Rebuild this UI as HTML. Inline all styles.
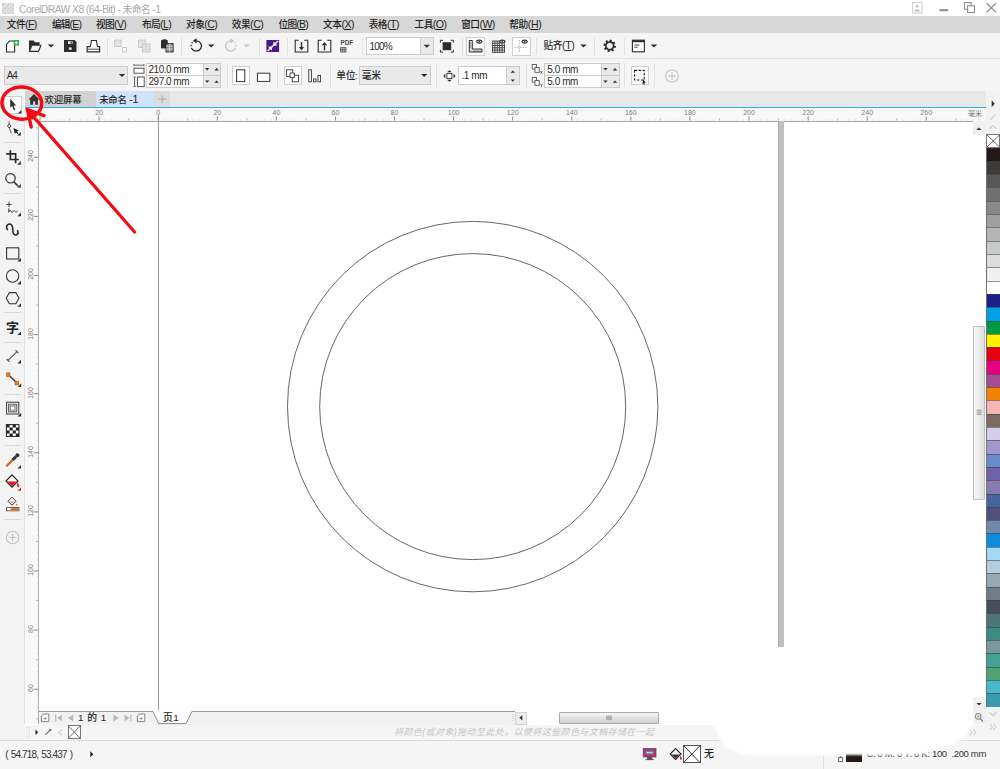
<!DOCTYPE html>
<html lang="zh"><head><meta charset="utf-8"><title>CorelDRAW X8</title>
<style>

html,body{margin:0;padding:0}
body{width:1000px;height:769px;position:relative;overflow:hidden;background:#fff;
 font-family:"Liberation Sans","Noto Sans CJK SC",sans-serif;font-size:10px;color:#262626;line-height:1;font-weight:500}
div{position:absolute;box-sizing:border-box;white-space:nowrap}
span{line-height:0}
span.l{font-size:10.6px}
u{text-decoration:underline;text-underline-offset:1px}
.bar{left:0;width:1000px}
.sep{width:1px;background:#e1e1e1}
.hsep{height:1px;background:#dcdcdc;left:4px;width:17px}
.inp{background:#fff;border:1px solid #cccccc}
.cmb{background:#e9e9e9;border:1px solid #cccccc}
.tx{font-size:10px;color:#2a2a2a}
.boxed{background:#fff;border:1px solid #cfcfcf}
.m{top:19.5px;font-size:10px;color:#1e1e1e;letter-spacing:-0.3px}
.rl{font-size:7px;color:#7c7c7c;top:109.4px;font-weight:400;transform:translateX(-50%)}
.vl{font-size:7px;color:#7c7c7c;left:30.4px;font-weight:400;transform:translate(-50%,-50%) rotate(-90deg)}
.sw{left:986px;width:14px}
svg{position:absolute;left:0;top:0}

</style></head>
<body>
<div style="left:24.5px;top:91px;width:975.5px;height:16.5px;background:#e7e7e7"></div>
<div style="left:24.5px;top:91px;width:71px;height:16px;background:#d2d2d2"></div>
<div style="left:95.5px;top:91px;width:58.5px;height:16px;background:#cfe4f9"></div>
<div style="left:154px;top:91px;width:15.5px;height:16px;background:#dcdcdc"></div>
<div id="tb1" style="left:44.5px;top:93.7px;font-size:9.4px;line-height:12px;color:#222;letter-spacing:-0.154px;">欢迎屏幕</div>
<div id="tb2" style="left:99.2px;top:93.7px;font-size:9.4px;line-height:12px;color:#222;letter-spacing:-0.253px;">未命名<span class="l"> -1</span></div>
<div style="left:24.5px;top:106.8px;width:961px;height:1.6px;background:#27b0ec"></div>
<div style="left:24.5px;top:108.4px;width:961px;height:13.2px;background:#f8f8f8"></div>
<div style="left:24px;top:121.4px;width:15px;height:603px;background:#f8f8f8;border-right:1px solid #b0b0b0;border-left:1px solid #e0e0e0"></div>
<div style="left:24.5px;top:108.4px;width:14px;height:13px;background:#f4f4f4"></div>
<div class="rl" style="left:99.1px">20</div>
<div class="rl" style="left:158.2px">0</div>
<div class="rl" style="left:217.3px">20</div>
<div class="rl" style="left:276.4px">40</div>
<div class="rl" style="left:335.4px">60</div>
<div class="rl" style="left:394.5px">80</div>
<div class="rl" style="left:453.6px">100</div>
<div class="rl" style="left:512.7px">120</div>
<div class="rl" style="left:571.8px">140</div>
<div class="rl" style="left:630.8px">160</div>
<div class="rl" style="left:689.9px">180</div>
<div class="rl" style="left:749.0px">200</div>
<div class="rl" style="left:808.1px">220</div>
<div class="rl" style="left:867.2px">240</div>
<div class="rl" style="left:926.2px">260</div>
<div style="left:968px;top:109.8px;font-size:7px;color:#777;font-weight:400">毫米</div>
<div class="vl" style="top:156.2px">240</div>
<div class="vl" style="top:215.3px">220</div>
<div class="vl" style="top:274.4px">200</div>
<div class="vl" style="top:333.5px">180</div>
<div class="vl" style="top:392.6px">160</div>
<div class="vl" style="top:451.7px">140</div>
<div class="vl" style="top:510.8px">120</div>
<div class="vl" style="top:569.9px">100</div>
<div class="vl" style="top:629.0px">80</div>
<div class="vl" style="top:688.1px">60</div>
<div style="left:38.5px;top:121px;width:947px;height:1px;background:#a6a6a6"></div>
<div style="left:157.7px;top:115px;width:1px;height:596px;background:#9c9c9c"></div>
<div style="left:778px;top:121.4px;width:5.8px;height:526px;background:#c1c1c1;border-left:1px solid #adadad"></div>
<div style="left:985.5px;top:91px;width:14.5px;height:649px;background:#f2f2f2"></div>
<div style="left:972.5px;top:121.4px;width:13px;height:14px;background:#f0f0f0"></div>
<div style="left:972.5px;top:697px;width:13px;height:27px;background:#f0f0f0"></div>
<div style="left:973px;top:326px;width:12px;height:174px;border:1px solid #bcbcbc;border-radius:1px;background:linear-gradient(90deg,#fafafa,#dedede)"></div>
<div class="sw" style="top:134px;height:13.5px;background:#fff;border:1px solid #777"></div>
<div class="sw" style="top:147.50px;height:13.61px;background:#231815;border-left:1px solid #6e6e6e;border-top:1px solid rgba(60,60,60,.55)"></div>
<div class="sw" style="top:160.81px;height:13.61px;background:#3e3a39;border-left:1px solid #6e6e6e;border-top:1px solid rgba(60,60,60,.55)"></div>
<div class="sw" style="top:174.12px;height:13.61px;background:#595757;border-left:1px solid #6e6e6e;border-top:1px solid rgba(60,60,60,.55)"></div>
<div class="sw" style="top:187.43px;height:13.61px;background:#727171;border-left:1px solid #6e6e6e;border-top:1px solid rgba(60,60,60,.55)"></div>
<div class="sw" style="top:200.74px;height:13.61px;background:#898989;border-left:1px solid #6e6e6e;border-top:1px solid rgba(60,60,60,.55)"></div>
<div class="sw" style="top:214.05px;height:13.61px;background:#9fa0a0;border-left:1px solid #6e6e6e;border-top:1px solid rgba(60,60,60,.55)"></div>
<div class="sw" style="top:227.36px;height:13.61px;background:#b5b5b6;border-left:1px solid #6e6e6e;border-top:1px solid rgba(60,60,60,.55)"></div>
<div class="sw" style="top:240.67px;height:13.61px;background:#c9caca;border-left:1px solid #6e6e6e;border-top:1px solid rgba(60,60,60,.55)"></div>
<div class="sw" style="top:253.98px;height:13.61px;background:#dcdddd;border-left:1px solid #6e6e6e;border-top:1px solid rgba(60,60,60,.55)"></div>
<div class="sw" style="top:267.29px;height:13.61px;background:#efefef;border-left:1px solid #6e6e6e;border-top:1px solid rgba(60,60,60,.55)"></div>
<div class="sw" style="top:280.60px;height:13.61px;background:#ffffff;border-left:1px solid #6e6e6e;border-top:1px solid rgba(60,60,60,.55)"></div>
<div class="sw" style="top:293.91px;height:13.61px;background:#1d2088;border-left:1px solid #6e6e6e;border-top:1px solid rgba(60,60,60,.55)"></div>
<div class="sw" style="top:307.22px;height:13.61px;background:#00a0e9;border-left:1px solid #6e6e6e;border-top:1px solid rgba(60,60,60,.55)"></div>
<div class="sw" style="top:320.53px;height:13.61px;background:#009944;border-left:1px solid #6e6e6e;border-top:1px solid rgba(60,60,60,.55)"></div>
<div class="sw" style="top:333.84px;height:13.61px;background:#fff100;border-left:1px solid #6e6e6e;border-top:1px solid rgba(60,60,60,.55)"></div>
<div class="sw" style="top:347.15px;height:13.61px;background:#e60012;border-left:1px solid #6e6e6e;border-top:1px solid rgba(60,60,60,.55)"></div>
<div class="sw" style="top:360.46px;height:13.61px;background:#e4007f;border-left:1px solid #6e6e6e;border-top:1px solid rgba(60,60,60,.55)"></div>
<div class="sw" style="top:373.77px;height:13.61px;background:#a84a94;border-left:1px solid #6e6e6e;border-top:1px solid rgba(60,60,60,.55)"></div>
<div class="sw" style="top:387.08px;height:13.61px;background:#f08300;border-left:1px solid #6e6e6e;border-top:1px solid rgba(60,60,60,.55)"></div>
<div class="sw" style="top:400.39px;height:13.61px;background:#f6b4b4;border-left:1px solid #6e6e6e;border-top:1px solid rgba(60,60,60,.55)"></div>
<div class="sw" style="top:413.70px;height:13.61px;background:#7d6b63;border-left:1px solid #6e6e6e;border-top:1px solid rgba(60,60,60,.55)"></div>
<div class="sw" style="top:427.01px;height:13.61px;background:#d4cee8;border-left:1px solid #6e6e6e;border-top:1px solid rgba(60,60,60,.55)"></div>
<div class="sw" style="top:440.32px;height:13.61px;background:#a296cc;border-left:1px solid #6e6e6e;border-top:1px solid rgba(60,60,60,.55)"></div>
<div class="sw" style="top:453.63px;height:13.61px;background:#6a8ccc;border-left:1px solid #6e6e6e;border-top:1px solid rgba(60,60,60,.55)"></div>
<div class="sw" style="top:466.94px;height:13.61px;background:#7160aa;border-left:1px solid #6e6e6e;border-top:1px solid rgba(60,60,60,.55)"></div>
<div class="sw" style="top:480.25px;height:13.61px;background:#8a7ab2;border-left:1px solid #6e6e6e;border-top:1px solid rgba(60,60,60,.55)"></div>
<div class="sw" style="top:493.56px;height:13.61px;background:#46649e;border-left:1px solid #6e6e6e;border-top:1px solid rgba(60,60,60,.55)"></div>
<div class="sw" style="top:506.87px;height:13.61px;background:#54507e;border-left:1px solid #6e6e6e;border-top:1px solid rgba(60,60,60,.55)"></div>
<div class="sw" style="top:520.18px;height:13.61px;background:#7088aa;border-left:1px solid #6e6e6e;border-top:1px solid rgba(60,60,60,.55)"></div>
<div class="sw" style="top:533.49px;height:13.61px;background:#0c8cda;border-left:1px solid #6e6e6e;border-top:1px solid rgba(60,60,60,.55)"></div>
<div class="sw" style="top:546.80px;height:13.61px;background:#a2d9f5;border-left:1px solid #6e6e6e;border-top:1px solid rgba(60,60,60,.55)"></div>
<div class="sw" style="top:560.11px;height:13.61px;background:#b2cede;border-left:1px solid #6e6e6e;border-top:1px solid rgba(60,60,60,.55)"></div>
<div class="sw" style="top:573.42px;height:13.61px;background:#98a8b2;border-left:1px solid #6e6e6e;border-top:1px solid rgba(60,60,60,.55)"></div>
<div class="sw" style="top:586.73px;height:13.61px;background:#707c86;border-left:1px solid #6e6e6e;border-top:1px solid rgba(60,60,60,.55)"></div>
<div class="sw" style="top:600.04px;height:13.61px;background:#484e58;border-left:1px solid #6e6e6e;border-top:1px solid rgba(60,60,60,.55)"></div>
<div class="sw" style="top:613.35px;height:13.61px;background:#4c7676;border-left:1px solid #6e6e6e;border-top:1px solid rgba(60,60,60,.55)"></div>
<div class="sw" style="top:626.66px;height:13.61px;background:#3c8a82;border-left:1px solid #6e6e6e;border-top:1px solid rgba(60,60,60,.55)"></div>
<div class="sw" style="top:639.97px;height:13.61px;background:#789a9a;border-left:1px solid #6e6e6e;border-top:1px solid rgba(60,60,60,.55)"></div>
<div class="sw" style="top:653.28px;height:13.61px;background:#44a292;border-left:1px solid #6e6e6e;border-top:1px solid rgba(60,60,60,.55)"></div>
<div class="sw" style="top:666.59px;height:13.61px;background:#50a272;border-left:1px solid #6e6e6e;border-top:1px solid rgba(60,60,60,.55)"></div>
<div class="sw" style="top:679.90px;height:13.61px;background:#48b9cd;border-left:1px solid #6e6e6e;border-top:1px solid rgba(60,60,60,.55)"></div>
<div class="sw" style="top:693.21px;height:13.61px;background:#3c9aae;border-left:1px solid #6e6e6e;border-top:1px solid rgba(60,60,60,.55)"></div>
<div class="bar" style="top:0;height:16px;background:#fff"></div>
<div id="ttl" style="left:19px;top:3.8px;font-size:9.8px;line-height:12px;color:#a9a9a9;letter-spacing:-0.601px;font-weight:400;"><span style="font-size:10.4px">CorelDRAW X8 (64-Bit) - </span>未命名<span style="font-size:10.4px"> -1</span></div>
<div class="bar" style="top:16px;height:17px;background:#d7d7d7"></div>
<div id="m0" style="left:6.8px;top:18.65px;font-size:9.7px;line-height:12px;color:#1e1e1e;letter-spacing:-0.584px;">文件<span class="l">(<u>F</u>)</span></div>
<div id="m1" style="left:51.9px;top:18.65px;font-size:9.7px;line-height:12px;color:#1e1e1e;letter-spacing:-0.863px;">编辑<span class="l">(<u>E</u>)</span></div>
<div id="m2" style="left:96px;top:18.65px;font-size:9.7px;line-height:12px;color:#1e1e1e;letter-spacing:-0.683px;">视图<span class="l">(<u>V</u>)</span></div>
<div id="m3" style="left:142.1px;top:18.65px;font-size:9.7px;line-height:12px;color:#1e1e1e;letter-spacing:-0.689px;">布局<span class="l">(<u>L</u>)</span></div>
<div id="m4" style="left:186.1px;top:18.65px;font-size:9.7px;line-height:12px;color:#1e1e1e;letter-spacing:-0.599px;">对象<span class="l">(<u>C</u>)</span></div>
<div id="m5" style="left:231.7px;top:18.65px;font-size:9.7px;line-height:12px;color:#1e1e1e;letter-spacing:-0.479px;">效果<span class="l">(<u>C</u>)</span></div>
<div id="m6" style="left:278.5px;top:18.65px;font-size:9.7px;line-height:12px;color:#1e1e1e;letter-spacing:-0.783px;">位图<span class="l">(<u>B</u>)</span></div>
<div id="m7" style="left:323px;top:18.65px;font-size:9.7px;line-height:12px;color:#1e1e1e;letter-spacing:-0.503px;">文本<span class="l">(<u>X</u>)</span></div>
<div id="m8" style="left:368.7px;top:18.65px;font-size:9.7px;line-height:12px;color:#1e1e1e;letter-spacing:-0.524px;">表格<span class="l">(<u>T</u>)</span></div>
<div id="m9" style="left:414.5px;top:18.65px;font-size:9.7px;line-height:12px;color:#1e1e1e;letter-spacing:-0.537px;">工具<span class="l">(<u>O</u>)</span></div>
<div id="m10" style="left:461.2px;top:18.65px;font-size:9.7px;line-height:12px;color:#1e1e1e;letter-spacing:-0.567px;">窗口<span class="l">(<u>W</u>)</span></div>
<div id="m11" style="left:509.2px;top:18.65px;font-size:9.7px;line-height:12px;color:#1e1e1e;letter-spacing:-0.359px;">帮助<span class="l">(<u>H</u>)</span></div>
<div class="bar" style="top:33px;height:25px;background:#f5f5f5"></div>
<div class="bar" style="top:58px;height:1px;background:#e2e2e2"></div>
<div class="sep" style="left:107px;top:38px;height:17px"></div>
<div class="sep" style="left:181px;top:38px;height:17px"></div>
<div class="sep" style="left:259px;top:38px;height:17px"></div>
<div class="sep" style="left:287px;top:38px;height:17px"></div>
<div class="sep" style="left:362px;top:38px;height:17px"></div>
<div class="sep" style="left:461.5px;top:38px;height:17px"></div>
<div class="sep" style="left:535.5px;top:38px;height:17px"></div>
<div class="sep" style="left:594px;top:38px;height:17px"></div>
<div class="sep" style="left:623.5px;top:38px;height:17px"></div>
<div class="inp" style="left:366px;top:37.4px;width:68px;height:18px"></div>
<div class="cmb" style="left:419.5px;top:37.4px;width:14.5px;height:18px"></div>
<div id="zm" style="left:369.6px;top:41px;font-size:10px;line-height:12px;color:#2a2a2a;letter-spacing:-0.845px;">100%</div>
<div class="boxed" style="left:466px;top:37px;width:19px;height:18.5px"></div>
<div class="boxed" style="left:512px;top:37px;width:18.5px;height:18.5px"></div>
<div id="snap" style="left:543.5px;top:40.05px;font-size:9.7px;line-height:12px;color:#2a2a2a;letter-spacing:-0.384px;">贴齐<span class="l">(<u>T</u>)</span></div>
<div id="pdf" style="left:340.4px;top:37.35px;font-size:6.3px;line-height:12px;color:#4a4a4a;letter-spacing:0.064px;font-weight:bold;">PDF</div>
<div class="bar" style="top:59px;height:32px;background:#f5f5f5"></div>
<div class="cmb" style="left:3.5px;top:66px;width:124px;height:18.5px"></div>
<div id="a4" style="left:6.8px;top:70.3px;font-size:10px;line-height:12px;color:#2a2a2a;letter-spacing:-1.117px;">A4</div>
<div class="inp" style="left:145.5px;top:62.5px;width:75.5px;height:13px"></div>
<div class="inp" style="left:145.5px;top:74.5px;width:75.5px;height:13.5px"></div>
<div class="cmb" style="left:202.5px;top:62.5px;width:18.5px;height:13px"></div>
<div class="cmb" style="left:202.5px;top:74.5px;width:18.5px;height:13.5px"></div>
<div id="pw" style="left:148.5px;top:63.6px;font-size:10px;line-height:12px;color:#2a2a2a;letter-spacing:-0.496px;">210.0 mm</div>
<div id="ph" style="left:148.5px;top:76.2px;font-size:10px;line-height:12px;color:#2a2a2a;letter-spacing:-0.496px;">297.0 mm</div>
<div class="sep" style="left:227px;top:63px;height:25px"></div>
<div class="sep" style="left:277px;top:63px;height:25px"></div>
<div class="sep" style="left:329.5px;top:63px;height:25px"></div>
<div class="sep" style="left:435.5px;top:63px;height:25px"></div>
<div class="sep" style="left:526px;top:63px;height:25px"></div>
<div class="sep" style="left:624px;top:63px;height:25px"></div>
<div class="sep" style="left:654px;top:63px;height:25px"></div>
<div class="boxed" style="left:231.5px;top:66px;width:18.5px;height:18.5px"></div>
<div class="boxed" style="left:283.5px;top:66px;width:18.5px;height:18.5px"></div>
<div id="unl" style="left:336.3px;top:69.55px;font-size:9.7px;line-height:12px;color:#2a2a2a;letter-spacing:-0.359px;">单位:</div>
<div class="cmb" style="left:359px;top:66px;width:71.5px;height:18.5px"></div>
<div id="unv" style="left:361.8px;top:69.55px;font-size:9.7px;line-height:12px;color:#2a2a2a;letter-spacing:-0.188px;">毫米</div>
<div class="inp" style="left:458px;top:66px;width:61.5px;height:18.5px"></div>
<div class="cmb" style="left:505.5px;top:66px;width:14px;height:18.5px"></div>
<div id="nud" style="left:461.5px;top:70px;font-size:10px;line-height:12px;color:#2a2a2a;letter-spacing:-0.416px;">.1 mm</div>
<div class="inp" style="left:544px;top:62.5px;width:75.5px;height:13px"></div>
<div class="inp" style="left:544px;top:74.5px;width:75.5px;height:13.5px"></div>
<div class="cmb" style="left:600.5px;top:62.5px;width:19px;height:13px"></div>
<div class="cmb" style="left:600.5px;top:74.5px;width:19px;height:13.5px"></div>
<div id="dx" style="left:547.2px;top:63.6px;font-size:10px;line-height:12px;color:#2a2a2a;letter-spacing:-0.424px;">5.0 mm</div>
<div id="dy" style="left:547.2px;top:76.2px;font-size:10px;line-height:12px;color:#2a2a2a;letter-spacing:-0.424px;">5.0 mm</div>
<div class="boxed" style="left:630.5px;top:66px;width:18px;height:18.5px"></div>
<div style="left:0;top:91px;width:24px;height:649px;background:#f3f3f3"></div>
<div class="boxed" style="left:3.5px;top:95.5px;width:18.5px;height:18.5px"></div>
<div class="hsep" style="top:141.8px"></div>
<div class="hsep" style="top:193.4px"></div>
<div class="hsep" style="top:312.3px"></div>
<div class="hsep" style="top:342px"></div>
<div class="hsep" style="top:393.6px"></div>
<div class="hsep" style="top:444.6px"></div>
<div class="hsep" style="top:519.3px"></div>
<div style="left:6px;top:321px;font-size:13px;font-weight:bold;color:#1e1e1e">字</div>
<div style="left:39px;top:711px;width:934px;height:13.5px;background:#fff"></div><div style="left:39px;top:711px;width:475.5px;height:13.5px;background:#f1f1f1;border-top:1px solid #9a9a9a"></div>
<div style="left:526.5px;top:712px;width:446px;height:12.5px;background:#fff"></div>
<div style="left:515px;top:712px;width:11.5px;height:12.5px;background:#ededed;border:1px solid #d4d4d4"></div>
<div style="left:559px;top:712px;width:100px;height:11.5px;border:1px solid #ababab;border-radius:1px;background:linear-gradient(180deg,#f6f6f6,#cfcfcf)"></div>
<div id="pg" style="left:78px;top:712.1px;font-size:9.8px;line-height:12px;color:#222;letter-spacing:0.492px;">1 的 1</div>
<div class="bar" style="top:724.5px;height:15.5px;background:#f5f5f5"></div>
<div style="left:0;top:724.5px;width:24.5px;height:15.5px;background:#f3f3f3"></div>
<div style="left:67.5px;top:725px;width:13.5px;height:14px;background:#fff;border:1px solid #777"></div>
<div id="hint" style="left:394px;top:726px;font-size:9px;line-height:12px;color:#c4c4c4;letter-spacing:0.397px;font-style:italic;font-weight:400;">将颜色(或对象)拖动至此处，以便将这些颜色与文档存储在一起</div>
<div class="bar" style="top:739.5px;height:1px;background:#dedede"></div>
<div class="bar" style="top:740.5px;height:28.5px;background:#f5f5f5"></div>
<div id="xy" style="left:5.2px;top:748.7px;font-size:10px;line-height:12px;color:#333;letter-spacing:-0.858px;word-spacing:1.2px;">( 54.718, 53.437 )</div>
<div style="left:683px;top:745px;width:17.5px;height:18px;background:#fff;border:1px solid #555"></div>
<div id="wu" style="left:704px;top:747.6px;font-size:10px;line-height:12px;color:#222;">无</div>
<div class="sep" style="left:823px;top:750px;height:19px;background:#e0e0e0"></div>
<div style="left:846px;top:748px;width:16px;height:14px;background:#231815"></div>
<div id="cmyk" style="left:866.4px;top:748.45px;font-size:9.5px;line-height:12px;color:#333;letter-spacing:-0.338px;">C: 0 M: 0 Y: 0 K: 100&nbsp; .200 mm</div>
<svg width="1000" height="769" viewBox="0 0 1000 769">
<rect x="2" y="3" width="12" height="11" fill="#d2d2d2"/>
<path d="M2,9 L8,3 M2,14 L13,3 M6,14 L14,6 M10,14 L14,10" stroke="#e9e9e9" stroke-width="1.2" fill="none"/>
<rect x="912.5" y="2.5" width="9.5" height="10.5" fill="none" stroke="#cfcfcf"/>
<circle cx="917.2" cy="6.3" r="1.4" fill="#bdbdbd"/><path d="M914.2,11.5 q3,-4.5 6,0 z" fill="#bdbdbd"/>
<line x1="939.5" y1="10.2" x2="948.2" y2="10.2" stroke="#8c8c8c" stroke-width="2"/>
<rect x="964.5" y="2.6" width="6.6" height="6.6" fill="none" stroke="#8c8c8c" stroke-width="1.1"/>
<rect x="967.6" y="5.7" width="6.8" height="6.8" fill="#fff" stroke="#8c8c8c" stroke-width="1.1"/>
<path d="M986.5,3.3 L996,12.4 M996,3.3 L986.5,12.4" stroke="#8c8c8c" stroke-width="1.3" fill="none"/>
<path d="M6.5,52 V44.2 L9.6,41 H14.6 V52 Z" fill="#fff" stroke="#2d2d2d" stroke-width="1.1"/>
<rect x="13.6" y="40" width="5.4" height="5.6" fill="#22b04b"/>
<path d="M16.3,41.2 V44.4 M14.7,42.8 H17.9" stroke="#fff" stroke-width="1"/>
<path d="M29,51.6 V40.5 H33.6 L35,42.2 H39.6 V45 H31.6 L29.4,51.6 Z" fill="#2d2d2d"/>
<path d="M29.5,51.4 L31.9,45.2 H40.9 L38.5,51.4 Z" fill="#f5f5f5" stroke="#2d2d2d" stroke-width="1.1"/>
<polygon points="47.8,44.6 54.2,44.6 51,47.6" fill="#2d2d2d"/>
<path d="M64,40.1 H74.5 L76.5,42 V52.1 H64 Z" fill="#2d2d2d"/>
<rect x="68" y="41.2" width="4.6" height="2.8" fill="#e8e8e8"/><rect x="70.6" y="41.6" width="1.2" height="2.2" fill="#2d2d2d"/>
<rect x="68.8" y="47.4" width="2.8" height="2.4" fill="#e8e8e8"/>
<path d="M90.4,47 L91.4,40.5 H96.4 L97.4,47" fill="#fff" stroke="#2d2d2d" stroke-width="1.1"/>
<path d="M90,46.6 H87.1 V51.8 H99.6 V46.6 H97.6" fill="none" stroke="#2d2d2d" stroke-width="1.2"/>
<line x1="87.5" y1="49.2" x2="99.3" y2="49.2" stroke="#2d2d2d" stroke-width="0.8"/>
<rect x="114.5" y="40" width="6.5" height="6.5" fill="#dcdcdc" stroke="#c4c4c4" stroke-width="0.8"/>
<path d="M114.5,42.2 H121 M114.5,44.4 H121 M117.7,40 V46.5" stroke="#f0f0f0" stroke-width="0.6"/>
<rect x="122.5" y="47.5" width="4" height="4.5" fill="none" stroke="#c4c4c4" stroke-width="0.8"/>
<rect x="138.5" y="40" width="7" height="7.5" fill="#e2e2e2" stroke="#c4c4c4" stroke-width="0.8"/>
<rect x="142.5" y="44" width="7.5" height="8" fill="#e6e6e6" stroke="#c4c4c4" stroke-width="0.8"/>
<path d="M142.5,46.6 H150 M142.5,49.3 H150 M146.2,44 V52" stroke="#cfcfcf" stroke-width="0.6"/>
<rect x="161" y="40" width="6.8" height="8.6" rx="0.8" fill="#2d2d2d"/>
<rect x="162.6" y="39.3" width="3.6" height="1.6" fill="#2d2d2d"/>
<rect x="166" y="43.6" width="7.2" height="8.4" fill="#8a8a8a" stroke="#2d2d2d" stroke-width="0.9"/>
<path d="M166,46.3 H173.2 M166,49 H173.2 M169.6,43.6 V52" stroke="#e8e8e8" stroke-width="0.7"/>
<path d="M196.3,40.8 A5.2,5.2 0 1 1 192.0,49.0" fill="none" stroke="#2d2d2d" stroke-width="1.3"/>
<path d="M192.0,49.0 A5.2,5.2 0 0 1 192.6,42.3" fill="none" stroke="#2d2d2d" stroke-width="1.3" stroke-dasharray="1.4 1.5"/>
<polygon points="192.8,40.8 196.6,38.2 196.6,43.4" fill="#2d2d2d"/>
<polygon points="208,44.6 214.4,44.6 211.2,47.6" fill="#2d2d2d"/>
<path d="M230.7,40.8 A5.2,5.2 0 1 0 235.0,49.0" fill="none" stroke="#c4c4c4" stroke-width="1.3"/>
<path d="M235.0,49.0 A5.2,5.2 0 0 0 234.4,42.3" fill="none" stroke="#c4c4c4" stroke-width="1.3" stroke-dasharray="1.4 1.5"/>
<polygon points="234.2,40.8 230.4,38.2 230.4,43.4" fill="#c4c4c4"/>
<polygon points="243.3,44.6 249.7,44.6 246.5,47.6" fill="#c4c4c4"/>
<rect x="266.4" y="40" width="12.7" height="12" fill="#4b1b85"/>
<path d="M267.6,51 L278,41" stroke="#efe6f8" stroke-width="1.7"/>
<polygon points="273.2,45.6 277.4,45.4 273.6,41.6" fill="#fff"/><polygon points="272.2,46.6 268,46.8 271.8,50.6" fill="#fff"/>
<path d="M298.8,40.2 H295.2 V52 H307.8 V40.2 H304.2" fill="none" stroke="#2d2d2d" stroke-width="1.1"/>
<path d="M301.5,42 V49.5" stroke="#2d2d2d" stroke-width="1.4"/><polygon points="298.9,47 304.1,47 301.5,50.2" fill="#2d2d2d"/>
<path d="M321.8,40.2 H318.2 V52 H330.8 V40.2 H327.2" fill="none" stroke="#2d2d2d" stroke-width="1.1"/>
<path d="M324.5,43 V50.3" stroke="#2d2d2d" stroke-width="1.4"/><polygon points="321.9,45.3 327.1,45.3 324.5,42" fill="#2d2d2d"/>
<path d="M340.5,47.6 H346 V52 H340.5 Z M342.3,47.6 V52 M344.2,47.6 V52 M340.5,49.8 H346" fill="none" stroke="#555" stroke-width="0.9"/>
<polygon points="423.6,44.7 430,44.7 426.8,47.7" fill="#2d2d2d"/>
<rect x="442.6" y="42.2" width="8.6" height="8" fill="#2d2d2d"/>
<path d="M440.4,42.6 V40.3 H443 M450.8,40.3 H453.4 V42.6 M453.4,49.8 V52.1 H450.8 M443,52.1 H440.4 V49.8" fill="none" stroke="#2d2d2d" stroke-width="1"/>
<path d="M469.3,40.5 V52 H482 V49 H472.3 V40.5 Z" fill="#d9d9d9" stroke="#2d2d2d" stroke-width="1"/>
<path d="M474,50.5 V52 M476,50.5 V52 M478,50.5 V52 M480,50.5 V52 M469.3,43 H470.8 M469.3,45 H470.8 M469.3,47 H470.8" stroke="#2d2d2d" stroke-width="0.6"/>
<ellipse cx="479.3" cy="41.6" rx="2.6" ry="1.5" fill="#fff" stroke="#333" stroke-width="1.1"/><circle cx="479.3" cy="41.6" r="0.9" fill="#333"/>
<path d="M492.5,41 V52.4 M494.9,41 V52.4 M497.3,41 V52.4 M499.7,41 V52.4 M502.1,43.5 V52.4 M504.5,43.5 V52.4 M492.5,43.2 H500 M492.5,45.5 H504.5 M492.5,47.8 H504.5 M492.5,50.1 H504.5 M492.5,52.4 H504.5 M492.5,41 H499.7" stroke="#3a3a3a" stroke-width="0.9" fill="none"/>
<ellipse cx="502.3" cy="41.6" rx="2.6" ry="1.5" fill="#fff" stroke="#333" stroke-width="1.1"/><circle cx="502.3" cy="41.6" r="0.9" fill="#333"/>
<path d="M519.3,40 V52.6 M514.5,47.4 H527.5" stroke="#9a9a9a" stroke-width="0.8" stroke-dasharray="1.6 1"/>
<ellipse cx="524.6" cy="41.6" rx="2.6" ry="1.5" fill="#fff" stroke="#333" stroke-width="1.1"/><circle cx="524.6" cy="41.6" r="0.9" fill="#333"/>
<polygon points="580.3,44.6 586.7,44.6 583.5,47.6" fill="#2d2d2d"/>
<path d="M616.00,46.03 L615.60,48.00 L613.97,47.76 L613.14,49.00 L613.99,50.41 L612.32,51.53 L611.34,50.20 L609.87,50.50 L609.47,52.10 L607.50,51.70 L607.74,50.07 L606.50,49.24 L605.09,50.09 L603.97,48.42 L605.30,47.44 L605.00,45.97 L603.40,45.57 L603.80,43.60 L605.43,43.84 L606.26,42.60 L605.41,41.19 L607.08,40.07 L608.06,41.40 L609.53,41.10 L609.93,39.50 L611.90,39.90 L611.66,41.53 L612.90,42.36 L614.31,41.51 L615.43,43.18 L614.10,44.16 L614.40,45.63 Z M609.70,42.70 a3.1,3.1 0 1 0 0.01,0 Z" fill="#2d2d2d" fill-rule="evenodd"/>
<rect x="632.4" y="40.2" width="12" height="11.6" fill="#fff" stroke="#2d2d2d" stroke-width="1.1"/>
<rect x="632.4" y="40.2" width="12" height="2" fill="#2d2d2d"/>
<path d="M634.4,45 H639.4 M634.4,47.2 H637.6" stroke="#2d2d2d" stroke-width="0.9"/>
<polygon points="650.8,44.6 657.2,44.6 654,47.6" fill="#2d2d2d"/>
<polygon points="118.8,74.1 125.2,74.1 122,77.1" fill="#2d2d2d"/>
<path d="M134,65.2 H144 M134,64.2 V66.2 M144,64.2 V66.2" stroke="#444" stroke-width="0.8"/>
<rect x="134" y="68.2" width="10" height="5" fill="#fff" stroke="#444" stroke-width="0.9"/>
<path d="M134.6,77 V86.6 M133.6,77 H135.6 M133.6,86.6 H135.6" stroke="#444" stroke-width="0.8"/>
<rect x="137.4" y="77" width="6.8" height="9.6" fill="#fff" stroke="#444" stroke-width="0.9"/>
<polygon points="205,68 209.4,68 207.2,70.4" fill="#2d2d2d"/>
<polygon points="214.4,70.4 218.8,70.4 216.6,68" fill="#2d2d2d"/>
<polygon points="603.3,68 607.7,68 605.5,70.4" fill="#2d2d2d"/>
<polygon points="612.8,70.4 617.2,70.4 615,68" fill="#2d2d2d"/>
<polygon points="205,80.4 209.4,80.4 207.2,82.8" fill="#2d2d2d"/>
<polygon points="214.4,82.8 218.8,82.8 216.6,80.4" fill="#2d2d2d"/>
<polygon points="603.3,80.4 607.7,80.4 605.5,82.8" fill="#2d2d2d"/>
<polygon points="612.8,82.8 617.2,82.8 615,80.4" fill="#2d2d2d"/>
<rect x="236.6" y="69.8" width="8.2" height="11.8" fill="#fff" stroke="#333" stroke-width="1"/>
<rect x="257.4" y="73.2" width="12.4" height="8.2" fill="#fff" stroke="#333" stroke-width="1"/>
<rect x="286.6" y="69.8" width="6.2" height="6.6" fill="#fff" stroke="#333" stroke-width="0.9"/>
<rect x="292.2" y="75.2" width="6.4" height="6.6" fill="#fff" stroke="#333" stroke-width="0.9"/><path d="M290,73 H294.4 V77.6 H290 Z" fill="#fff" stroke="#333" stroke-width="0.9"/>
<rect x="308.8" y="69.8" width="2.6" height="12" fill="#fff" stroke="#333" stroke-width="0.9"/>
<rect x="313.6" y="79" width="2.4" height="2.8" fill="#fff" stroke="#333" stroke-width="0.9"/>
<rect x="318" y="75.4" width="2.6" height="6.4" fill="#fff" stroke="#333" stroke-width="0.9"/>
<polygon points="421,74.1 427.4,74.1 424.2,77.1" fill="#2d2d2d"/>
<rect x="446.9" y="73.5" width="5" height="5" fill="#fff" stroke="#333" stroke-width="0.9"/>
<polygon points="447,72.2 451.8,72.2 449.4,70.2" fill="#2d2d2d"/>
<polygon points="447,79.8 451.8,79.8 449.4,81.8" fill="#2d2d2d"/>
<polygon points="443.3,76 445.3,73.6 445.3,78.4" fill="#2d2d2d"/><polygon points="455.5,76 453.5,73.6 453.5,78.4" fill="#2d2d2d"/>
<polygon points="510.6,72.8 515,72.8 512.8,70.4" fill="#2d2d2d"/>
<polygon points="510.6,79.4 515,79.4 512.8,81.8" fill="#2d2d2d"/>
<rect x="532.2" y="64.5" width="4.2" height="4.6" fill="#fff" stroke="#444" stroke-width="0.8"/>
<rect x="535" y="67.5" width="4.2" height="4.8" fill="#fff" stroke="#444" stroke-width="0.8"/>
<rect x="532.2" y="77.5" width="4.2" height="4.6" fill="#fff" stroke="#444" stroke-width="0.8"/>
<rect x="535" y="80.5" width="4.2" height="4.8" fill="#fff" stroke="#444" stroke-width="0.8"/>
<path d="M540.4,71 L542.4,73.8 M542.4,71 L540.4,73.8" stroke="#444" stroke-width="0.7"/>
<path d="M540.4,84 L541.4,85.6 L542.4,84 M541.4,85.6 V87.2" stroke="#444" stroke-width="0.7" fill="none"/>
<rect x="634.6" y="70.4" width="9.6" height="9.6" fill="none" stroke="#222" stroke-width="1.1" stroke-dasharray="2.6 1.4"/>
<polygon points="643.2,79.4 646,82.6 644.2,82.8 645,84.4 644,84.8 643.2,83.2 642.2,84.2" fill="#222"/>
<circle cx="672" cy="76" r="6.3" fill="none" stroke="#c2c2c2" stroke-width="1.1"/><path d="M672,72.2 V79.8 M668.2,76 H675.8" stroke="#c2c2c2" stroke-width="1.1"/>
<path d="M45.9,119.4V120.6M51.9,119.4V120.6M57.8,119.4V120.6M63.7,119.4V120.6M75.5,119.4V120.6M81.4,119.4V120.6M87.3,119.4V120.6M93.2,119.4V120.6M105.0,119.4V120.6M110.9,119.4V120.6M116.8,119.4V120.6M122.8,119.4V120.6M134.6,119.4V120.6M140.5,119.4V120.6M146.4,119.4V120.6M152.3,119.4V120.6M164.1,119.4V120.6M170.0,119.4V120.6M175.9,119.4V120.6M181.8,119.4V120.6M193.6,119.4V120.6M199.6,119.4V120.6M205.5,119.4V120.6M211.4,119.4V120.6M223.2,119.4V120.6M229.1,119.4V120.6M235.0,119.4V120.6M240.9,119.4V120.6M252.7,119.4V120.6M258.6,119.4V120.6M264.5,119.4V120.6M270.5,119.4V120.6M282.3,119.4V120.6M288.2,119.4V120.6M294.1,119.4V120.6M300.0,119.4V120.6M311.8,119.4V120.6M317.7,119.4V120.6M323.6,119.4V120.6M329.5,119.4V120.6M341.3,119.4V120.6M347.3,119.4V120.6M353.2,119.4V120.6M359.1,119.4V120.6M370.9,119.4V120.6M376.8,119.4V120.6M382.7,119.4V120.6M388.6,119.4V120.6M400.4,119.4V120.6M406.3,119.4V120.6M412.2,119.4V120.6M418.2,119.4V120.6M430.0,119.4V120.6M435.9,119.4V120.6M441.8,119.4V120.6M447.7,119.4V120.6M459.5,119.4V120.6M465.4,119.4V120.6M471.3,119.4V120.6M477.2,119.4V120.6M489.0,119.4V120.6M495.0,119.4V120.6M500.9,119.4V120.6M506.8,119.4V120.6M518.6,119.4V120.6M524.5,119.4V120.6M530.4,119.4V120.6M536.3,119.4V120.6M548.1,119.4V120.6M554.0,119.4V120.6M559.9,119.4V120.6M565.9,119.4V120.6M577.7,119.4V120.6M583.6,119.4V120.6M589.5,119.4V120.6M595.4,119.4V120.6M607.2,119.4V120.6M613.1,119.4V120.6M619.0,119.4V120.6M624.9,119.4V120.6M636.7,119.4V120.6M642.7,119.4V120.6M648.6,119.4V120.6M654.5,119.4V120.6M666.3,119.4V120.6M672.2,119.4V120.6M678.1,119.4V120.6M684.0,119.4V120.6M695.8,119.4V120.6M701.7,119.4V120.6M707.6,119.4V120.6M713.6,119.4V120.6M725.4,119.4V120.6M731.3,119.4V120.6M737.2,119.4V120.6M743.1,119.4V120.6M754.9,119.4V120.6M760.8,119.4V120.6M766.7,119.4V120.6M772.6,119.4V120.6M784.4,119.4V120.6M790.4,119.4V120.6M796.3,119.4V120.6M802.2,119.4V120.6M814.0,119.4V120.6M819.9,119.4V120.6M825.8,119.4V120.6M831.7,119.4V120.6M843.5,119.4V120.6M849.4,119.4V120.6M855.3,119.4V120.6M861.3,119.4V120.6M873.1,119.4V120.6M879.0,119.4V120.6M884.9,119.4V120.6M890.8,119.4V120.6M902.6,119.4V120.6M908.5,119.4V120.6M914.4,119.4V120.6M920.3,119.4V120.6M932.1,119.4V120.6M938.1,119.4V120.6M944.0,119.4V120.6M949.9,119.4V120.6M961.7,119.4V120.6M967.6,119.4V120.6M973.5,119.4V120.6M979.4,119.4V120.6M37,133.7H38.2M37,139.6H38.2M37,145.5H38.2M37,151.4H38.2M37,163.2H38.2M37,169.1H38.2M37,175.0H38.2M37,180.9H38.2M37,192.8H38.2M37,198.7H38.2M37,204.6H38.2M37,210.5H38.2M37,222.3H38.2M37,228.2H38.2M37,234.1H38.2M37,240.0H38.2M37,251.9H38.2M37,257.8H38.2M37,263.7H38.2M37,269.6H38.2M37,281.4H38.2M37,287.3H38.2M37,293.2H38.2M37,299.1H38.2M37,311.0H38.2M37,316.9H38.2M37,322.8H38.2M37,328.7H38.2M37,340.5H38.2M37,346.4H38.2M37,352.3H38.2M37,358.2H38.2M37,370.1H38.2M37,376.0H38.2M37,381.9H38.2M37,387.8H38.2M37,399.6H38.2M37,405.5H38.2M37,411.4H38.2M37,417.3H38.2M37,429.2H38.2M37,435.1H38.2M37,441.0H38.2M37,446.9H38.2M37,458.7H38.2M37,464.6H38.2M37,470.5H38.2M37,476.4H38.2M37,488.3H38.2M37,494.2H38.2M37,500.1H38.2M37,506.0H38.2M37,517.8H38.2M37,523.7H38.2M37,529.6H38.2M37,535.5H38.2M37,547.4H38.2M37,553.3H38.2M37,559.2H38.2M37,565.1H38.2M37,576.9H38.2M37,582.8H38.2M37,588.7H38.2M37,594.6H38.2M37,606.5H38.2M37,612.4H38.2M37,618.3H38.2M37,624.2H38.2M37,636.0H38.2M37,641.9H38.2M37,647.8H38.2M37,653.7H38.2M37,665.6H38.2M37,671.5H38.2M37,677.4H38.2M37,683.3H38.2M37,695.1H38.2M37,701.0H38.2M37,706.9H38.2M37,712.8H38.2" stroke="#d2d2d2" stroke-width="0.9" fill="none"/>
<path d="M69.6,118.4V120.6M128.7,118.4V120.6M187.7,118.4V120.6M246.8,118.4V120.6M305.9,118.4V120.6M365.0,118.4V120.6M424.1,118.4V120.6M483.1,118.4V120.6M542.2,118.4V120.6M601.3,118.4V120.6M660.4,118.4V120.6M719.5,118.4V120.6M778.5,118.4V120.6M837.6,118.4V120.6M896.7,118.4V120.6M955.8,118.4V120.6M36,127.8H38.2M36,186.9H38.2M36,246.0H38.2M36,305.1H38.2M36,364.1H38.2M36,423.2H38.2M36,482.4H38.2M36,541.5H38.2M36,600.5H38.2M36,659.7H38.2M36,718.8H38.2" stroke="#b0b0b0" stroke-width="0.9" fill="none"/>
<path d="M40.0,116.4V120.6M99.1,116.4V120.6M158.2,116.4V120.6M217.3,116.4V120.6M276.4,116.4V120.6M335.4,116.4V120.6M394.5,116.4V120.6M453.6,116.4V120.6M512.7,116.4V120.6M571.8,116.4V120.6M630.8,116.4V120.6M689.9,116.4V120.6M749.0,116.4V120.6M808.1,116.4V120.6M867.2,116.4V120.6M926.2,116.4V120.6M33.8,157.3H38.2M33.8,216.4H38.2M33.8,275.5H38.2M33.8,334.6H38.2M33.8,393.7H38.2M33.8,452.8H38.2M33.8,511.9H38.2M33.8,571.0H38.2M33.8,630.1H38.2M33.8,689.2H38.2" stroke="#8a8a8a" stroke-width="1" fill="none"/>
<path d="M34,94 L28.6,99.4 H30.2 V104.8 H33 V101.6 H35.2 V104.8 H37.9 V99.4 H39.4 Z" fill="#333"/>
<path d="M162.2,95.2 V103.2 M158.2,99.2 H166.2" stroke="#b4b4b4" stroke-width="1.2"/>
<polygon points="991.7,100.6 991.7,107 994.7,103.8" fill="#222"/>
<path d="M990.5,119.5 L995.2,114.6" stroke="#d2d2d2" stroke-width="1.4"/>
<polygon points="976.3,130.1 981.5,130.1 978.9,127.5" fill="#333"/>
<path d="M989.6,128.8 L993,125.6 L996.4,128.8" stroke="#cfcfcf" stroke-width="1.2" fill="none"/>
<path d="M987,135 L999.5,147 M999.5,135 L987,147" stroke="#555" stroke-width="0.9"/>
<path d="M976.6,410.2 H981.6 M976.6,412.2 H981.6 M976.6,414.2 H981.6" stroke="#777" stroke-width="0.8"/>
<polygon points="976.4,702.9 981.6,702.9 979,705.5" fill="#333"/>
<circle cx="978.2" cy="716.4" r="2.9" fill="none" stroke="#777" stroke-width="1"/><path d="M980.4,718.8 L983,721.6" stroke="#777" stroke-width="1.3"/><path d="M976.8,716.4 H979.6 M978.2,715 V717.8" stroke="#888" stroke-width="0.6"/>
<path d="M989.6,712.4 L993,715.6 L996.4,712.4" stroke="#c4c4c4" stroke-width="1.2" fill="none"/>
<path d="M989.8,724 L992.4,727 L989.8,730 M993.4,724 L996,727 L993.4,730" stroke="#cdcdcd" stroke-width="1.1" fill="none"/>
<path d="M969.6,729.4 L972.2,732.4 L969.6,735.4 M973.2,729.4 L975.8,732.4 L973.2,735.4" stroke="#d4d4d4" stroke-width="1.1" fill="none"/>
<polygon points="10.2,98.6 10.2,107.8 12.1,106.1 13.9,110.5 15.4,109.9 13.6,105.6 16.2,105.4" fill="#333"/>
<polygon points="21.4,110 21.4,113.6 17.8,113.6" fill="#2d2d2d"/>
<path d="M9.2,121.6 C8.6,126 9.6,130 11.6,133.4" fill="none" stroke="#444" stroke-width="0.9"/>
<circle cx="9.2" cy="126" r="1.5" fill="#fff" stroke="#333" stroke-width="0.9"/>
<polygon points="13.4,128 18.8,130.6 17,131.6 18.4,133.2 17.4,134 16,132.4 14.8,133.8" fill="#222"/>
<polygon points="20.8,132 20.8,135.6 17.2,135.6" fill="#2d2d2d"/>
<path d="M6.2,153.8 H15.6 V163.3 M10.4,150.2 V159.5 H18.8" fill="none" stroke="#2a2a2a" stroke-width="1.7"/>
<polygon points="20.8,161.1 20.8,164.7 17.2,164.7" fill="#2d2d2d"/>
<circle cx="10.5" cy="178.3" r="4.7" fill="none" stroke="#333" stroke-width="1.2"/><path d="M13.9,181.9 L18,186" stroke="#333" stroke-width="1.6"/>
<polygon points="20.8,184 20.8,187.6 17.2,187.6" fill="#2d2d2d"/>
<path d="M9,201.8 V207 M6.4,204.4 H11.6" stroke="#333" stroke-width="0.9"/>
<path d="M8.8,208.4 V212.2 C9.6,210 10.6,210 11.2,211.6 C11.8,213 12.6,212.6 13.2,211.4 C13.8,210.2 14.6,210.4 15.2,211.4 C15.8,212.4 16.8,212 17.6,210.8" fill="none" stroke="#333" stroke-width="1"/>
<polygon points="21,212.6 21,216.2 17.4,216.2" fill="#2d2d2d"/>
<path d="M7.4,229.6 C4.8,225.6 9.6,221.8 12,225.6 C13.6,228.2 11.8,231.2 13.6,233.8 C15.6,236.4 19.4,234 17.6,230.8" fill="none" stroke="#2a2a2a" stroke-width="1.6" stroke-linecap="round"/>
<rect x="6.6" y="247.8" width="12.2" height="11.2" fill="none" stroke="#333" stroke-width="1.1"/>
<polygon points="21,258 21,261.6 17.4,261.6" fill="#2d2d2d"/>
<circle cx="12.6" cy="276" r="6.2" fill="none" stroke="#333" stroke-width="1.1"/>
<polygon points="21,280.8 21,284.4 17.4,284.4" fill="#2d2d2d"/>
<polygon points="6.2,298.2 9.4,292.6 15.8,292.6 19,298.2 15.8,303.8 9.4,303.8" fill="none" stroke="#333" stroke-width="1.1"/>
<polygon points="21,303.2 21,306.8 17.4,306.8" fill="#2d2d2d"/>
<polygon points="21,331.4 21,335 17.4,335" fill="#2d2d2d"/>
<path d="M8,360.4 L17,351.6 M6.6,359 L9.4,361.8 M15.6,350.2 L18.4,353" stroke="#555" stroke-width="1.1"/>
<polygon points="21,359.8 21,363.4 17.4,363.4" fill="#2d2d2d"/>
<path d="M8,374.6 L17,383" stroke="#333" stroke-width="1.4"/>
<rect x="6.2" y="372.8" width="3.8" height="3.8" fill="#ee7a1a" stroke="#b65a10" stroke-width="0.5"/><rect x="15" y="381.2" width="3.8" height="3.8" fill="#ee7a1a" stroke="#b65a10" stroke-width="0.5"/>
<polygon points="21.2,383.4 21.2,387 17.6,387" fill="#2d2d2d"/>
<rect x="6.6" y="402.2" width="12.2" height="11.8" fill="#fff" stroke="#333" stroke-width="1"/><rect x="8.6" y="404.2" width="8.2" height="7.8" fill="#bbb" stroke="#555" stroke-width="0.9"/><rect x="10.6" y="406.2" width="4.2" height="3.8" fill="#fff" stroke="#777" stroke-width="0.6"/>
<polygon points="21.2,412.8 21.2,416.4 17.6,416.4" fill="#2d2d2d"/>
<rect x="6.4" y="424.6" width="12.6" height="11.8" fill="#fff" stroke="#222" stroke-width="1"/>
<path d="M6.40,424.60h3.15v2.95h-3.15zM12.70,424.60h3.15v2.95h-3.15zM9.55,427.55h3.15v2.95h-3.15zM15.85,427.55h3.15v2.95h-3.15zM6.40,430.50h3.15v2.95h-3.15zM12.70,430.50h3.15v2.95h-3.15zM9.55,433.45h3.15v2.95h-3.15zM15.85,433.45h3.15v2.95h-3.15z" fill="#222"/>
<path d="M7,465.6 L14.6,458" stroke="#d9661c" stroke-width="2.2" stroke-linecap="round"/>
<path d="M12.6,460 L16,456.6" stroke="#333" stroke-width="3"/><circle cx="17.4" cy="455.2" r="2" fill="#333"/>
<polygon points="21,465 21,468.6 17.4,468.6" fill="#2d2d2d"/>
<polygon points="12,474.8 18,481 12,487.2 6,481" fill="#fff" stroke="#222" stroke-width="1.2"/>
<polygon points="7.6,481.6 16.6,481.6 12,486.2" fill="#e8141e"/>
<path d="M17.4,482.6 C19.6,484.6 19.8,487 18.6,487.6 C17.2,487.4 16.6,485 17.4,482.6" fill="#e8141e"/>
<polygon points="21,487.6 21,490.8 17.8,490.8" fill="#c81018"/>
<polygon points="12,497.2 16,501.2 12,505.2 8,501.2" fill="#fff" stroke="#333" stroke-width="1"/>
<path d="M10.2,501.6 H13.8 L12,503.6 Z" fill="#e0701c"/><circle cx="16.6" cy="504.6" r="0.9" fill="#e0701c"/>
<rect x="6.4" y="507.6" width="12.6" height="3.2" fill="#fff" stroke="#444" stroke-width="0.8"/><rect x="10.6" y="508" width="8" height="2.4" fill="#e0701c"/>
<circle cx="12.6" cy="537.5" r="6.3" fill="none" stroke="#c0c0c0" stroke-width="1.1"/><path d="M12.6,533.7 V541.3 M8.8,537.5 H16.4" stroke="#c0c0c0" stroke-width="1.1"/>
<circle cx="472.7" cy="406.6" r="185.2" fill="none" stroke="#555" stroke-width="0.9"/>
<circle cx="472.7" cy="406.6" r="153" fill="none" stroke="#555" stroke-width="0.9"/>
<path d="M41.4,721.6 V716 L43.4,714 H48.8 V721.6 Z" fill="#fff" stroke="#777" stroke-width="0.9"/><path d="M43.8,718.6 H46.8 M45.3,717.2 V720" stroke="#777" stroke-width="0.7"/>
<path d="M137.4,721.6 V716 L139.4,714 H144.8 V721.6 Z" fill="#fff" stroke="#777" stroke-width="0.9"/><path d="M139.8,718.6 H142.8 M141.3,717.2 V720" stroke="#777" stroke-width="0.7"/>
<polygon points="61.9,714.8 61.9,721.2 56.9,718" fill="#b9b9b9"/>
<path d="M55.6,714.6 V721.4" stroke="#b9b9b9" stroke-width="1.2"/>
<polygon points="73.3,714.6 73.3,721.4 67.9,718" fill="#b9b9b9"/>
<polygon points="113.5,714.6 113.5,721.4 118.9,718" fill="#b9b9b9"/>
<polygon points="124.5,714.8 124.5,721.2 129.5,718" fill="#b9b9b9"/>
<path d="M130.8,714.6 V721.4" stroke="#b9b9b9" stroke-width="1.2"/>
<path d="M153,711.5 L158.6,723.6 H186 L192,711.5" fill="#fff" stroke="#8c8c8c" stroke-width="1"/>
<path d="M153.6,711.5 H191.4" stroke="#fff" stroke-width="1.4"/>
<path d="M513,714 V722" stroke="#c9c9c9" stroke-width="1.4" stroke-dasharray="1 1"/>
<polygon points="522.3,715.2 522.3,720.4 519.3,717.8" fill="#333"/>
<path d="M607,715.6 V720.2 M609,715.6 V720.2 M611,715.6 V720.2" stroke="#555" stroke-width="0.7"/>
<path d="M27,727 V738 M29.4,727 V738" stroke="#d2d2d2" stroke-width="1" stroke-dasharray="1 1.4"/>
<polygon points="35.5,729.4 35.5,735 38.1,732.2" fill="#222"/>
<path d="M45.6,734.6 L49.6,730.6" stroke="#8a6a50" stroke-width="1.3"/><circle cx="50.2" cy="730" r="1.1" fill="#555"/>
<path d="M62,729.4 L58.6,732.4 L62,735.4" stroke="#d0d0d0" stroke-width="1.2" fill="none"/>
<path d="M68.2,725.8 L80.4,738.4 M80.4,725.8 L68.2,738.4" stroke="#555" stroke-width="0.9"/>
<polygon points="90.3,751.2 90.3,757.2 93.3,754.2" fill="#222"/>
<rect x="643.2" y="748.4" width="12.8" height="8.6" fill="#e8222a" stroke="#2c5fa8" stroke-width="0.8"/><rect x="645.4" y="750.6" width="8.4" height="4" fill="#3a8ee0"/><path d="M646.6,752.6 H652.6" stroke="#fff" stroke-width="0.8"/><path d="M647.6,757.4 H651.8 V759 H647.6 Z M645.6,759.6 H653.8" stroke="#444" stroke-width="0.9" fill="#666"/>
<polygon points="675.6,748.6 681,754 675.6,759.4 670.2,754" fill="#fff" stroke="#222" stroke-width="1.1"/><polygon points="671.6,754.6 679.6,754.6 675.6,758.6" fill="#333"/><path d="M680.4,756 C682,757.8 682,759.6 681,760 C679.8,759.8 679.6,757.8 680.4,756" fill="#e8141e"/>
<path d="M683.8,745.8 L699.8,762.4 M699.8,745.8 L683.8,762.4" stroke="#333" stroke-width="1"/>
<path d="M838.6,757.6 H842.6 V761.6 H838.6 Z M840.6,756 V757.6" stroke="#555" stroke-width="0.9" fill="none"/>
</svg>
<div id="ptab" style="left:163px;top:712.1px;font-size:9.8px;line-height:12px;color:#222;letter-spacing:0.525px;">页1</div>
<svg width="1000" height="769" viewBox="0 0 1000 769"><defs><filter id="bl" x="-5%" y="-20%" width="110%" height="140%"><feGaussianBlur stdDeviation="0.9"/></filter></defs><path d="M973.0,690.0 L973.0,692.1 L973.0,695.1 L973.0,698.6 L973.0,702.5 L973.0,706.4 L973.0,710.2 L973.0,713.4 L973.0,716.0 L973.0,717.9 L972.9,719.3 L972.9,720.4 L972.9,721.2 L972.8,721.9 L972.7,722.6 L972.6,723.2 L972.4,724.0 L972.2,724.8 L972.0,725.6 L971.7,726.3 L971.5,727.0 L971.1,727.7 L970.8,728.4 L970.3,729.2 L969.8,730.0 L969.2,730.9 L968.6,731.9 L967.9,732.9 L967.2,734.0 L966.4,735.0 L965.5,736.1 L964.6,737.1 L963.5,738.0 L962.3,738.9 L961.0,739.8 L959.5,740.6 L958.0,741.5 L956.5,742.3 L955.0,743.0 L953.4,743.7 L952.0,744.4 L950.6,745.0 L949.1,745.5 L947.7,746.0 L946.3,746.5 L944.9,746.9 L943.5,747.2 L942.2,747.6 L941.0,748.0 L939.8,748.4 L938.7,748.7 L937.7,749.0 L936.7,749.2 L935.7,749.5 L934.8,749.8 L933.9,750.1 L933.0,750.4 L932.2,750.7 L931.5,751.1 L930.8,751.5 L930.2,751.9 L929.5,752.2 L928.8,752.6 L928.0,752.9 L927.0,753.2 L926.0,753.4 L925.2,753.7 L924.3,753.9 L923.4,754.1 L922.2,754.2 L920.6,754.4 L918.6,754.5 L916.0,754.6 L912.7,754.7 L908.7,754.8 L904.2,754.8 L899.4,754.8 L894.5,754.8 L889.4,754.9 L884.6,754.9 L880.0,754.9 L875.7,754.9 L871.6,754.9 L867.6,755.0 L863.6,755.0 L859.5,755.0 L855.3,755.0 L850.8,755.1 L846.0,755.1 L840.8,755.2 L835.2,755.3 L829.4,755.4 L823.4,755.5 L817.3,755.6 L811.4,755.7 L805.5,755.7 L800.0,755.8 L794.5,755.8 L789.0,755.9 L783.5,755.9 L778.1,755.9 L772.9,755.9 L768.1,755.9 L763.8,755.9 L760.0,755.8 L756.9,755.7 L754.4,755.5 L752.4,755.4 L750.8,755.2 L749.3,755.0 L748.0,754.8 L746.6,754.5 L745.0,754.2 L743.3,753.9 L741.7,753.5 L740.1,753.2 L738.5,752.8 L737.0,752.3 L735.6,751.9 L734.2,751.4 L733.0,751.0 L731.9,750.6 L730.9,750.1 L729.9,749.7 L729.1,749.2 L728.3,748.8 L727.5,748.2 L726.8,747.6 L726.0,747.0 L725.2,746.3 L724.5,745.5 L723.8,744.6 L723.1,743.8 L722.4,742.8 L721.7,741.9 L721.1,740.9 L720.5,740.0 L719.9,739.0 L719.3,738.1 L718.8,737.1 L718.3,736.1 L717.8,735.0 L717.3,734.0 L716.9,733.0 L716.5,732.0 L716.2,731.0 L715.8,730.1 L715.6,729.2 L715.3,728.2 L715.1,727.3 L714.9,726.3 L714.8,725.2 L714.6,724.0 L714.5,722.8 L714.3,721.5 L714.3,720.2 L714.2,718.9 L714.1,717.4 L714.1,715.8 L714.0,714.0 L714.0,712.0 L714.0,709.6 L714.0,706.7 L714.0,703.5 L714.0,700.2 L714.0,697.1 L714.0,694.2 L714.0,691.8 L714.0,690.0 Z" fill="#fff" filter="url(#bl)"/></svg>
<div style="left:724px;top:690px;width:240px;height:34px;background:#fff"></div>
<svg width="1000" height="769" viewBox="0 0 1000 769">
<ellipse cx="21.8" cy="103.1" rx="19.9" ry="16.1" fill="none" stroke="#f40a14" stroke-width="3.4" transform="rotate(3 21.8 103.1)"/><path d="M134.6,232 L27,109.4" stroke="#f40a14" stroke-width="3.2" stroke-linecap="round" fill="none"/><path d="M44,115.6 L27.4,109.6 L31.2,127" stroke="#f40a14" stroke-width="3.4" stroke-linecap="round" stroke-linejoin="round" fill="none"/><polygon points="27,109 38,114 32,120" fill="#f40a14"/>
</svg>

</body></html>
